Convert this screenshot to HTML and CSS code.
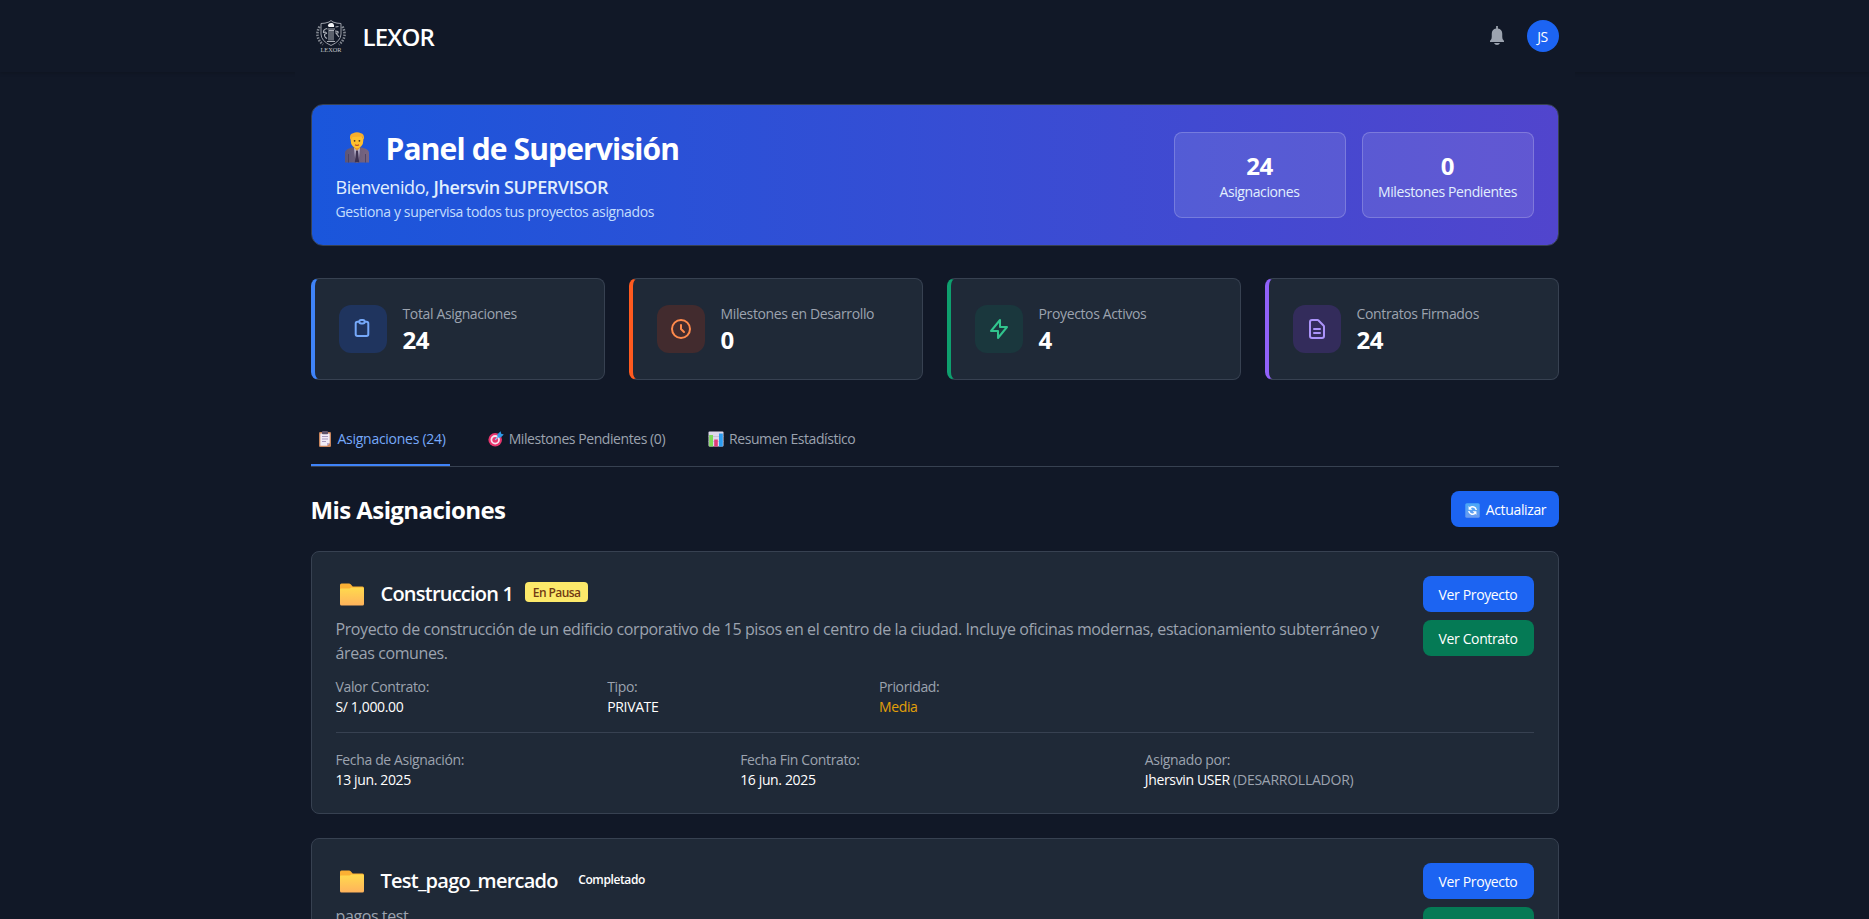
FILE: index.html
```html
<!DOCTYPE html>
<html lang="es">
<head>
<meta charset="utf-8">
<title>LEXOR - Panel de Supervisión</title>
<link rel="stylesheet" href="styles.css">
</head>
<body>
<svg class="defs" width="0" height="0" aria-hidden="true">
  <defs>
    <linearGradient id="gFolder" x1="0" y1="0" x2="0" y2="1"><stop offset="0" stop-color="#ffda4d"/><stop offset="1" stop-color="#ffb35c"/></linearGradient>
    <linearGradient id="gSuit" x1="0" y1="0" x2="1" y2="0"><stop offset="0" stop-color="#5c5677"/><stop offset="1" stop-color="#7a6580"/></linearGradient>
    <linearGradient id="gRefresh" x1="0" y1="0" x2="0" y2="1"><stop offset="0" stop-color="#4aa8f7"/><stop offset="1" stop-color="#6c9bf0"/></linearGradient>
    <symbol id="folder" viewBox="0 0 24 23">
      <path d="M0 2a1.500 1.500 0 0 1 1.500-1.500h7.500q1 0 1.700.8l2 2.200h9.800A1.500 1.500 0 0 1 24 5v5H0z" fill="#fbb034"/>
      <path d="M0 6.500q0-1 1-1h8.500l2-1h11A1.500 1.500 0 0 1 24 6v15a1.500 1.500 0 0 1-1.500 1.500h-21A1.500 1.500 0 0 1 0 21z" fill="url(#gFolder)"/>
    </symbol>
  </defs>
</svg>
<header class="navbar">
  <div class="wrap navbar-in">
    <div class="brand">
      <svg class="logo" viewBox="0 0 32 34" fill="none" stroke="#a9adb5">
        <path d="M16 1.500 18 3q4 1.500 8 1.500V15q0 7-10 11.500Q6 22 6 15V4.500q4 0 8-1.500z" stroke-width=".9"/>
        <path d="M4.500 7.500Q-1 18 8 25.500M27.500 7.500Q33 18 24 25.500" stroke-width="2.600" stroke-dasharray="1.500 1.300" opacity=".75"/>
        <path d="M12.800 7q.5-3.500 4.200-3 2.500.8 2 4h-5z" fill="#f3f4f6" stroke="none"/>
        <path d="M12.500 10h7.500M13.500 11.500h5.500M14 12v9.500M16 12v9.500M18 12v9.500M12 22.500h8" stroke-width="1"/>
        <path d="M12 9.500q-4 1-3.500 4 3-1 3 1-3.500.5-1 4l1.500 1M20.500 8l3-.5M20 12q4 0 3 2l-2 0 3 4" stroke-width="1.200"/>
        <text x="5.500" y="33" textLength="21" lengthAdjust="spacingAndGlyphs" class="logo-word">LEXOR</text>
      </svg>
      <span class="brand-name">LEXOR</span>
    </div>
    <div class="user">
      <svg class="bell" viewBox="0 0 14 20" fill="#9ca3af"><path d="M6.125 0h1.750v2.600A5.300 5.300 0 0 1 12.250 7.800V11q0 2.200 1.300 3.200.45.4.45 1V16H0v-.8q0-.6.450-1Q1.750 13.200 1.750 11V7.800A5.300 5.300 0 0 1 6.125 2.600zM4 17h6q-.8 2-3 2t-3-2z"/></svg>
      <span class="avatar">JS</span>
    </div>
  </div>
</header>
<main class="wrap main">
  <section class="hero">
    <div>
      <h1 class="hero-title">
        <svg class="person" viewBox="0 0 24 31">
          <path d="M0 30.500V21q0-3 4-4.500l5-1.500h6l5 1.500q4 1.500 4 4.500v9.500z" fill="url(#gSuit)"/>
          <path d="M9 16h6l-1.500 14.500h-3z" fill="#b9b2c9"/><path d="M11 18.500h2l1.200 12H9.800z" fill="#3c3150"/>
          <path d="M3.500 22v8.500M20.500 22v8.500" stroke="#453d60" stroke-width=".8"/>
          <path d="M9.500 12h5v4.500L12 18.500l-2.500-2z" fill="#e89a28"/>
          <ellipse cx="12" cy="8.800" rx="6.300" ry="7.400" fill="#ffc02e"/>
          <path d="M5.300 8Q4 2 8 1.200 12-.8 16 1.200q4 1 2.700 6.800L17 4.500 7.500 5z" fill="#f9ae2b"/>
          <circle cx="9.600" cy="8.800" r=".9" fill="#4a3327"/><circle cx="14.400" cy="8.800" r=".9" fill="#4a3327"/>
          <path d="M10 12.800q2 1.200 4 0" stroke="#b8452e" stroke-width="1.100" fill="none"/>
        </svg>
        <span>Panel de Supervisión</span>
      </h1>
      <p class="welcome">Bienvenido, <b>Jhersvin SUPERVISOR</b></p>
      <p class="tagline">Gestiona y supervisa todos tus proyectos asignados</p>
    </div>
    <div class="hero-stats">
      <div class="hero-stat"><strong>24</strong><span>Asignaciones</span></div>
      <div class="hero-stat"><strong>0</strong><span>Milestones Pendientes</span></div>
    </div>
  </section>

  <section class="stats">
    <article class="stat blue">
      <div class="stat-icon"><svg viewBox="0 0 24 24"><path d="M9 5H7a2 2 0 0 0-2 2v12a2 2 0 0 0 2 2h10a2 2 0 0 0 2-2V7a2 2 0 0 0-2-2h-2M9 5a2 2 0 0 0 2 2h2a2 2 0 0 0 2-2M9 5a2 2 0 0 1 2-2h2a2 2 0 0 1 2 2" transform="translate(.2 .2) scale(.9)" stroke-width="2.200"/></svg></div>
      <div class="stat-text"><p class="stat-label">Total Asignaciones</p><p class="stat-num">24</p></div>
    </article>
    <article class="stat orange">
      <div class="stat-icon"><svg viewBox="0 0 24 24"><path d="M12 8v4l3 3m6-3a9 9 0 1 1-18 0 9 9 0 0 1 18 0z"/></svg></div>
      <div class="stat-text"><p class="stat-label">Milestones en Desarrollo</p><p class="stat-num">0</p></div>
    </article>
    <article class="stat green">
      <div class="stat-icon"><svg viewBox="0 0 24 24"><path d="M13 10V3L4 14h7v7l9-11h-7z"/></svg></div>
      <div class="stat-text"><p class="stat-label">Proyectos Activos</p><p class="stat-num">4</p></div>
    </article>
    <article class="stat purple">
      <div class="stat-icon"><svg viewBox="0 0 24 24"><path d="M9 12h6m-6 4h6m2 5H7a2 2 0 0 1-2-2V5a2 2 0 0 1 2-2h5.586a1 1 0 0 1 .707.293l5.414 5.414a1 1 0 0 1 .293.707V19a2 2 0 0 1-2 2z"/></svg></div>
      <div class="stat-text"><p class="stat-label">Contratos Firmados</p><p class="stat-num">24</p></div>
    </article>
  </section>

  <nav class="tabs">
    <a class="tab active">
      <svg viewBox="0 0 16 16"><rect x="2" y="1" width="12" height="15" rx="1.200" fill="#c9855c"/><path d="M3.300 2.500h9.400V12L10 14.800H3.300z" fill="#f1ecf7"/><path d="M12.700 12H10v2.800z" fill="#b9a9cf"/><rect x="5" y="0" width="6" height="3.200" rx=".8" fill="#5d5269"/><path d="M5 5.500h6M5 8h6M5 10.500h4" stroke="#9d90b5" stroke-width=".9"/></svg>
      <span>Asignaciones (24)</span></a>
    <a class="tab">
      <svg viewBox="0 0 16 16"><circle cx="7.200" cy="8.800" r="6.800" fill="#e8356d"/><circle cx="7.200" cy="8.800" r="4.700" fill="#f6e3f0"/><circle cx="7.200" cy="8.800" r="2.900" fill="#e8356d"/><path d="M7.200 8.800 12 4" stroke="#7fd0ff" stroke-width="1.200"/><path d="M9.500 6.500V3.300L12.600.2l.6 2.600 2.600.6-3.100 3.100z" fill="#2f9be8"/></svg>
      <span>Milestones Pendientes (0)</span></a>
    <a class="tab">
      <svg viewBox="0 0 16 16"><rect x=".5" y=".5" width="15" height="15" rx="1" fill="#ded7ea"/><path d="M.5 5.500h15M.5 10.500h15" stroke="#b8aec9" stroke-width=".6"/><rect x="1.200" y="4" width="3.800" height="11.500" fill="#7ed957"/><rect x="6.200" y="8.500" width="3.600" height="7" fill="#e03a78"/><rect x="11" y="2.500" width="3.800" height="13" fill="#2b9cf0"/></svg>
      <span>Resumen Estadístico</span></a>
  </nav>

  <div class="list-head">
    <h2>Mis Asignaciones</h2>
    <button class="btn refresh"><svg viewBox="0 0 15 15"><rect x=".3" y=".3" width="14.400" height="14.400" rx="1.500" fill="url(#gRefresh)"/><path d="M11.200 7A3.700 3.700 0 0 0 5 4.800M3.800 8a3.700 3.700 0 0 0 6.200 2.200" fill="none" stroke="#fff" stroke-width="1.500"/><path d="M3.600 3v3.800h3.800zM11.400 12V8.200H7.600z" fill="#fff"/></svg><span>Actualizar</span></button>
  </div>

  <article class="card">
    <div class="card-top">
      <div class="card-body">
        <div class="card-title"><svg class="folder"><use href="#folder"/></svg><h3>Construccion 1</h3><span class="badge pause">En Pausa</span></div>
        <p class="desc">Proyecto de construcción de un edificio corporativo de 15 pisos en el centro de la ciudad. Incluye oficinas modernas, estacionamiento subterráneo y<br>áreas comunes.</p>
        <dl class="facts four">
          <div><dt>Valor Contrato:</dt><dd>S/ 1,000.00</dd></div>
          <div><dt>Tipo:</dt><dd>PRIVATE</dd></div>
          <div><dt>Prioridad:</dt><dd class="medium">Media</dd></div>
        </dl>
      </div>
      <div class="actions"><button class="btn">Ver Proyecto</button><button class="btn contract">Ver Contrato</button></div>
    </div>
    <dl class="facts three">
      <div><dt>Fecha de Asignación:</dt><dd>13 jun. 2025</dd></div>
      <div><dt>Fecha Fin Contrato:</dt><dd>16 jun. 2025</dd></div>
      <div><dt>Asignado por:</dt><dd>Jhersvin USER <span class="role">(DESARROLLADOR)</span></dd></div>
    </dl>
  </article>

  <article class="card">
    <div class="card-top">
      <div class="card-body">
        <div class="card-title"><svg class="folder"><use href="#folder"/></svg><h3>Test_pago_mercado</h3><span class="badge done">Completado</span></div>
        <p class="desc">pagos test</p>
      </div>
      <div class="actions"><button class="btn">Ver Proyecto</button><button class="btn contract">Ver Contrato</button></div>
    </div>
  </article>
</main>
</body>
</html>
```

FILE: styles.css
```css
* { box-sizing: border-box; margin: 0; padding: 0; }
html, body { height: 100%; }
body {
  background: #111827;
  color: #fff;
  font-family: "Open Sans", "Noto Sans", sans-serif;
  font-size: 14px;
  line-height: 20px;
  letter-spacing: -0.36px;
  overflow: hidden;
}
svg { display: block; flex: none; }
.defs { position: absolute; }
.wrap { width: 1280px; margin: 0 auto; padding: 0 16px; background: #111827; }

.navbar { height: 72px; box-shadow: 0 1px 4px rgba(0, 0, 0, .2); }
.navbar-in { height: 72px; display: flex; justify-content: space-between; align-items: center; }
.brand { display: flex; align-items: center; gap: 16px; padding-left: 4px; }
.logo { width: 32px; height: 34px; }
.logo-word { font: 400 7px "Liberation Serif", serif; letter-spacing: 0; fill: #c3c6cc; stroke: none; }
.brand-name { font-size: 24px; line-height: 32px; font-weight: 600; padding-top: 2px; letter-spacing: -.8px; }
.user { display: flex; align-items: center; gap: 23px; }
.bell { width: 14px; height: 20px; }
.avatar {
  width: 32px; height: 32px; border-radius: 50%; background: #1c64f2;
  display: flex; align-items: center; justify-content: center; padding-top: 2px;
}

.main { padding-top: 32px; }
.hero {
  height: 142px; border: 1px solid #374151; border-radius: 12px; padding: 0 24px;
  background: linear-gradient(90deg, #1a56db, #5145cd);
  display: flex; justify-content: space-between; align-items: center;
}
.hero-title {
  display: flex; align-items: center; gap: 17px; padding: 4px 0 0 9px; margin-bottom: 6px;
  font-size: 30px; line-height: 36px; font-weight: 700; letter-spacing: -.87px;
}
.person { width: 24px; height: 31px; margin-top: -2px; }
.welcome { font-size: 18px; line-height: 28px; color: #e1effe; letter-spacing: -.43px; }
.welcome b { font-weight: 600; }
.tagline { color: #c3ddfd; margin: 1px 0 2px; }
.hero-stats { display: flex; gap: 16px; }
.hero-stat {
  width: 172px; height: 86px; border: 1px solid rgba(255, 255, 255, .2); border-radius: 8px; padding-top: 2px;
  background: rgba(255, 255, 255, .1); display: flex; flex-direction: column; align-items: center; justify-content: center;
  color: #e1effe;
}
.hero-stat span { letter-spacing: -.4px; }
.hero-stat strong { font-size: 24px; line-height: 32px; color: #fff; }

.stats { display: grid; grid-template-columns: repeat(4, 1fr); gap: 24px; margin-top: 32px; }
.stat {
  height: 102px; background: #1f2937; border: 1px solid #374151; border-left: 4px solid; border-radius: 8px;
  display: flex; align-items: center; gap: 16px; padding-left: 24px;
}
.stat-icon { width: 48px; height: 48px; border-radius: 12px; display: flex; align-items: center; justify-content: center; }
.stat-icon svg { width: 24px; height: 24px; fill: none; stroke: currentColor; stroke-width: 2; stroke-linecap: round; stroke-linejoin: round; }
.stat-text { padding-top: 2px; }
.stat-label { color: #9ca3af; }
.stat-num { font-size: 24px; line-height: 32px; font-weight: 700; }
.blue { border-left-color: #3f83f8; }
.blue .stat-icon { background: #1f345e; color: #76a9fa; }
.orange { border-left-color: #ff5a1f; }
.orange .stat-icon { background: #422b2e; color: #ff8a4c; }
.green { border-left-color: #0e9f6e; }
.green .stat-icon { background: #1a373d; color: #31c48d; }
.purple { border-left-color: #9061f9; }
.purple .stat-icon { background: #332c5b; color: #ac94fa; }

.tabs { height: 55px; margin-top: 32px; border-bottom: 1px solid #374151; display: flex; gap: 32px; }
.tab { display: flex; align-items: center; gap: 5px; height: 54px; padding: 2px 5px 0 6px; color: #9ca3af; border-bottom: 2px solid transparent; letter-spacing: -.43px; }
.tab svg { width: 16px; height: 16px; }
.tab.active { padding-right: 4px; color: #76a9fa; border-color: #3f83f8; letter-spacing: -.27px; }

.list-head { display: flex; justify-content: space-between; align-items: center; height: 36px; margin: 24px 0; }
.list-head h2 { font-size: 24px; line-height: 32px; font-weight: 700; padding-top: 2px; letter-spacing: -.58px; }
.btn {
  height: 36px; border: 0; border-radius: 8px; background: #1c64f2; color: #fff; font: inherit;
  letter-spacing: inherit; display: flex; align-items: center; justify-content: center; padding-top: 2px;
}
.refresh { width: 108px; gap: 6px; padding-left: 2px; }
.refresh svg { width: 15px; height: 15px; }

.card { background: #1f2937; border: 1px solid #374151; border-radius: 8px; padding: 24px; height: 263px; margin-bottom: 24px; }
.card-top { display: flex; gap: 16px; }
.card-body { flex: 1; min-width: 0; }
.card-title { display: flex; align-items: center; height: 36px; }
.folder { width: 24px; height: 23px; margin: 0 17px 0 4px; }
.card-title h3 { font-size: 20px; line-height: 28px; font-weight: 600; letter-spacing: -.77px; }
.badge { height: 20px; line-height: 21px; font-size: 12px; font-weight: 600; border-radius: 4px; padding: 0 7.5px; margin: -4px 0 0 12px; letter-spacing: -.56px; }
.pause { background: #fce96a; color: #723b13; }
.done { padding-left: 8.5px; letter-spacing: -.38px; }
.desc { font-size: 16px; line-height: 24px; color: #9ca3af; margin-top: 5px; white-space: nowrap; letter-spacing: -.4px; }
.facts { display: grid; gap: 16px; }
.four { grid-template-columns: repeat(4, 1fr); margin-top: 12px; }
.three { grid-template-columns: repeat(3, 1fr); margin-top: 15px; border-top: 1px solid #374151; padding-top: 17px; }
.facts dt { color: #9ca3af; }
.medium { color: #e3a008; }
.role { color: #9ca3af; letter-spacing: -.25px; }
.actions { width: 111px; display: flex; flex-direction: column; gap: 8px; }
.actions .contract { background: #057a55; }
```
